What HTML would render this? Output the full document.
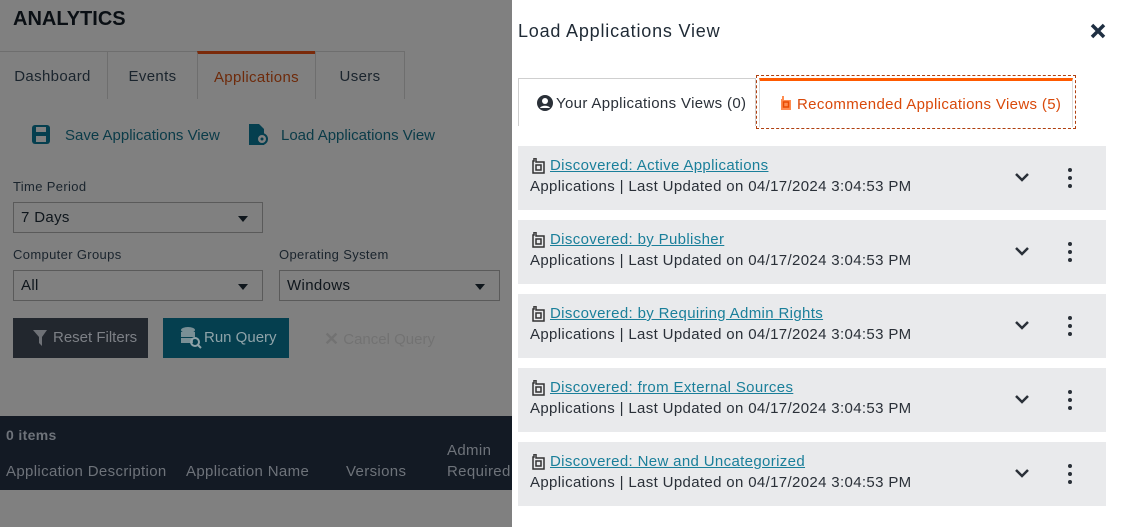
<!DOCTYPE html>
<html><head><meta charset="utf-8"><style>
*{box-sizing:border-box;margin:0;padding:0}
body{width:1123px;height:527px;overflow:hidden;position:relative;font-family:"Liberation Sans",sans-serif;background:#808080;color:#0f161c;letter-spacing:0.35px}
.a{position:absolute;white-space:nowrap}
.tab{position:absolute;top:51px;height:48px;border:1px solid #6e6e6e;border-bottom:none;font-size:15px;color:#1a242d;text-align:center;line-height:50px}
.sel{position:absolute;height:31px;border:1px solid #5a5a5a;font-size:15px;color:#0f161c;padding-left:7px;line-height:30px}
.sel:after{content:"";position:absolute;right:14px;top:13px;border:5px solid transparent;border-top:6px solid #0f161c}
.lbl{position:absolute;font-size:13px;color:#1a242d}
.panel{position:absolute;left:512px;top:0;width:611px;height:527px;background:#fff}
.card{position:absolute;left:6px;width:588px;height:64px;background:#e9eaec}
.card .t{position:absolute;left:32px;top:11px;font-size:15px;color:#1a7f9a;text-decoration:underline}
.card .s{position:absolute;left:12px;top:32px;font-size:15px;color:#2a3038}
.card .ic{position:absolute;left:14px;top:12px}
.card .ch{position:absolute;left:496px;top:26px}
.card .dt{position:absolute;left:550px;top:22px;width:4px}
.dt i{display:block;width:4px;height:4px;border-radius:2px;background:#2a3038;margin-bottom:4px}
</style></head><body>
<div class="a" style="left:13px;top:8px;font-size:20px;font-weight:bold;color:#0a0f14;letter-spacing:0">ANALYTICS</div>
<div style="position:absolute;left:0;top:51px;width:108px;height:1px;background:#6e6e6e"></div>
<div class="tab" style="left:-2px;width:110px;border-left:none;border-top:1px solid #6e6e6e">Dashboard</div>
<div class="tab" style="left:107px;width:91px">Events</div>
<div class="tab" style="left:197px;width:119px;border-top:3px solid #7a2a0a;color:#6e2a0a;line-height:48px">Applications</div>
<div class="tab" style="left:315px;width:90px">Users</div>
<svg class="a" style="left:32px;top:125px" width="18" height="19" viewBox="0 0 18 19"><rect x="0" y="0" width="18" height="19" rx="3" fill="#053f4f"/><rect x="4" y="2" width="10" height="5" fill="#808080"/><rect x="4" y="11" width="10" height="6" fill="#808080"/></svg>
<div class="a" style="left:65px;top:127px;font-size:15px;color:#0a3b48;letter-spacing:0">Save Applications View</div>
<svg class="a" style="left:249px;top:124px" width="19" height="22" viewBox="0 0 19 22"><path d="M0 0h10l5 5v16H0z" fill="#053f4f"/><circle cx="13" cy="15" r="5" fill="#808080" stroke="#053f4f" stroke-width="2"/><circle cx="13" cy="15" r="1.5" fill="#053f4f"/></svg>
<div class="a" style="left:281px;top:127px;font-size:15px;color:#0a3b48;letter-spacing:0">Load Applications View</div>
<div class="lbl" style="left:13px;top:179px">Time Period</div>
<div class="sel" style="left:13px;top:202px;width:250px">7 Days</div>
<div class="lbl" style="left:13px;top:247px">Computer Groups</div>
<div class="sel" style="left:13px;top:270px;width:250px">All</div>
<div class="lbl" style="left:279px;top:247px">Operating System</div>
<div class="sel" style="left:279px;top:270px;width:221px">Windows</div>
<div class="a" style="left:13px;top:318px;width:135px;height:40px;background:#22272e;color:#7d8086;font-size:15px;line-height:40px;padding-left:40px;letter-spacing:0">Reset Filters</div>
<svg class="a" style="left:33px;top:330px" width="16" height="17" viewBox="0 0 16 17"><path d="M0 0h14l-5 7v9l-3-3V7z" fill="#6e7176"/></svg>
<div class="a" style="left:163px;top:318px;width:126px;height:40px;background:#053f4f;color:#8fa3a9;font-size:15px;line-height:40px;padding-left:41px;letter-spacing:0">Run Query</div>
<svg class="a" style="left:180px;top:326px" width="22" height="24" viewBox="0 0 22 24"><ellipse cx="8" cy="4" rx="7" ry="3" fill="#7a8f95"/><rect x="1" y="6" width="14" height="5" fill="#7a8f95"/><rect x="1" y="12" width="12" height="5" fill="#7a8f95"/><circle cx="15" cy="16" r="4" fill="none" stroke="#8fa3a9" stroke-width="2"/><path d="M18 19l3 3" stroke="#8fa3a9" stroke-width="2"/></svg>
<div class="a" style="left:324px;top:329px;font-size:15px;color:#727272;letter-spacing:0"><span style="font-weight:bold;font-size:18px;vertical-align:-1px">✕</span> Cancel Query</div>
<div class="a" style="left:0;top:416px;width:512px;height:74px;background:#131a24"></div>
<div class="a" style="left:6px;top:427px;font-size:14px;font-weight:bold;color:#6e737a">0 items</div>
<div class="a" style="left:6px;top:463px;font-size:15px;color:#6e737a">Application Description</div>
<div class="a" style="left:186px;top:463px;font-size:15px;color:#6e737a">Application Name</div>
<div class="a" style="left:346px;top:463px;font-size:15px;color:#6e737a">Versions</div>
<div class="a" style="left:447px;top:442px;font-size:15px;color:#6e737a">Admin</div>
<div class="a" style="left:447px;top:463px;font-size:15px;color:#6e737a">Required</div>

<div class="panel">
<div class="a" style="left:6px;top:21px;font-size:18px;color:#1f2a35;letter-spacing:0.8px">Load Applications View</div>
<svg class="a" style="left:578px;top:23px" width="16" height="16" viewBox="0 0 16 16"><path d="M2 2l12 12M14 2L2 14" stroke="#1f2f42" stroke-width="3.5"/></svg>
<div class="a" style="left:6px;top:78px;width:238px;height:48px;border:1px solid #cfcfcf;border-bottom:none;background:#fff"></div>
<svg class="a" style="left:25px;top:95px" width="16" height="16" viewBox="0 0 16 16"><circle cx="8" cy="8" r="8" fill="#2a3038"/><circle cx="8" cy="6" r="3" fill="#fff"/><path d="M3 13c1-3 9-3 10 0" fill="#fff"/></svg>
<div class="a" style="left:44px;top:95px;font-size:15px;color:#2a3038">Your Applications Views (0)</div>
<div class="a" style="left:244px;top:75px;width:320px;height:54px;border:1px dashed #b04010"></div>
<div class="a" style="left:247px;top:78px;width:314px;height:49px;border-top:3px solid #ff5a00;border-left:1px solid #ddd;border-right:1px solid #ddd"></div>
<svg class="a" style="left:268px;top:96px" width="12" height="15" viewBox="0 0 12 15"><path d="M2 0v3H1v11h10V4H4V0z" fill="#ff8c50"/><rect x="3.5" y="6" width="5" height="5" fill="none" stroke="#e84a00" stroke-width="1.5"/></svg>
<div class="a" style="left:285px;top:96px;font-size:15px;color:#d9490a">Recommended Applications Views (5)</div>

<div class="card" style="top:146px"><svg class="ic" width="13" height="16" viewBox="0 0 13 16"><path d="M2 0v3H1v12h11V4H4V0z" fill="none" stroke="#333" stroke-width="1.5"/><rect x="4" y="7" width="5" height="5" fill="none" stroke="#333" stroke-width="1.5"/></svg><div class="t">Discovered: Active Applications</div><div class="s">Applications | Last Updated on 04/17/2024 3:04:53 PM</div><svg class="ch" width="16" height="10" viewBox="0 0 16 10"><path d="M2 2l6 6 6-6" fill="none" stroke="#2a3038" stroke-width="2.5"/></svg><div class="dt"><i></i><i></i><i></i></div></div>
<div class="card" style="top:220px"><svg class="ic" width="13" height="16" viewBox="0 0 13 16"><path d="M2 0v3H1v12h11V4H4V0z" fill="none" stroke="#333" stroke-width="1.5"/><rect x="4" y="7" width="5" height="5" fill="none" stroke="#333" stroke-width="1.5"/></svg><div class="t">Discovered: by Publisher</div><div class="s">Applications | Last Updated on 04/17/2024 3:04:53 PM</div><svg class="ch" width="16" height="10" viewBox="0 0 16 10"><path d="M2 2l6 6 6-6" fill="none" stroke="#2a3038" stroke-width="2.5"/></svg><div class="dt"><i></i><i></i><i></i></div></div>
<div class="card" style="top:294px"><svg class="ic" width="13" height="16" viewBox="0 0 13 16"><path d="M2 0v3H1v12h11V4H4V0z" fill="none" stroke="#333" stroke-width="1.5"/><rect x="4" y="7" width="5" height="5" fill="none" stroke="#333" stroke-width="1.5"/></svg><div class="t">Discovered: by Requiring Admin Rights</div><div class="s">Applications | Last Updated on 04/17/2024 3:04:53 PM</div><svg class="ch" width="16" height="10" viewBox="0 0 16 10"><path d="M2 2l6 6 6-6" fill="none" stroke="#2a3038" stroke-width="2.5"/></svg><div class="dt"><i></i><i></i><i></i></div></div>
<div class="card" style="top:368px"><svg class="ic" width="13" height="16" viewBox="0 0 13 16"><path d="M2 0v3H1v12h11V4H4V0z" fill="none" stroke="#333" stroke-width="1.5"/><rect x="4" y="7" width="5" height="5" fill="none" stroke="#333" stroke-width="1.5"/></svg><div class="t">Discovered: from External Sources</div><div class="s">Applications | Last Updated on 04/17/2024 3:04:53 PM</div><svg class="ch" width="16" height="10" viewBox="0 0 16 10"><path d="M2 2l6 6 6-6" fill="none" stroke="#2a3038" stroke-width="2.5"/></svg><div class="dt"><i></i><i></i><i></i></div></div>
<div class="card" style="top:442px"><svg class="ic" width="13" height="16" viewBox="0 0 13 16"><path d="M2 0v3H1v12h11V4H4V0z" fill="none" stroke="#333" stroke-width="1.5"/><rect x="4" y="7" width="5" height="5" fill="none" stroke="#333" stroke-width="1.5"/></svg><div class="t">Discovered: New and Uncategorized</div><div class="s">Applications | Last Updated on 04/17/2024 3:04:53 PM</div><svg class="ch" width="16" height="10" viewBox="0 0 16 10"><path d="M2 2l6 6 6-6" fill="none" stroke="#2a3038" stroke-width="2.5"/></svg><div class="dt"><i></i><i></i><i></i></div></div>
</div>
</body></html>
